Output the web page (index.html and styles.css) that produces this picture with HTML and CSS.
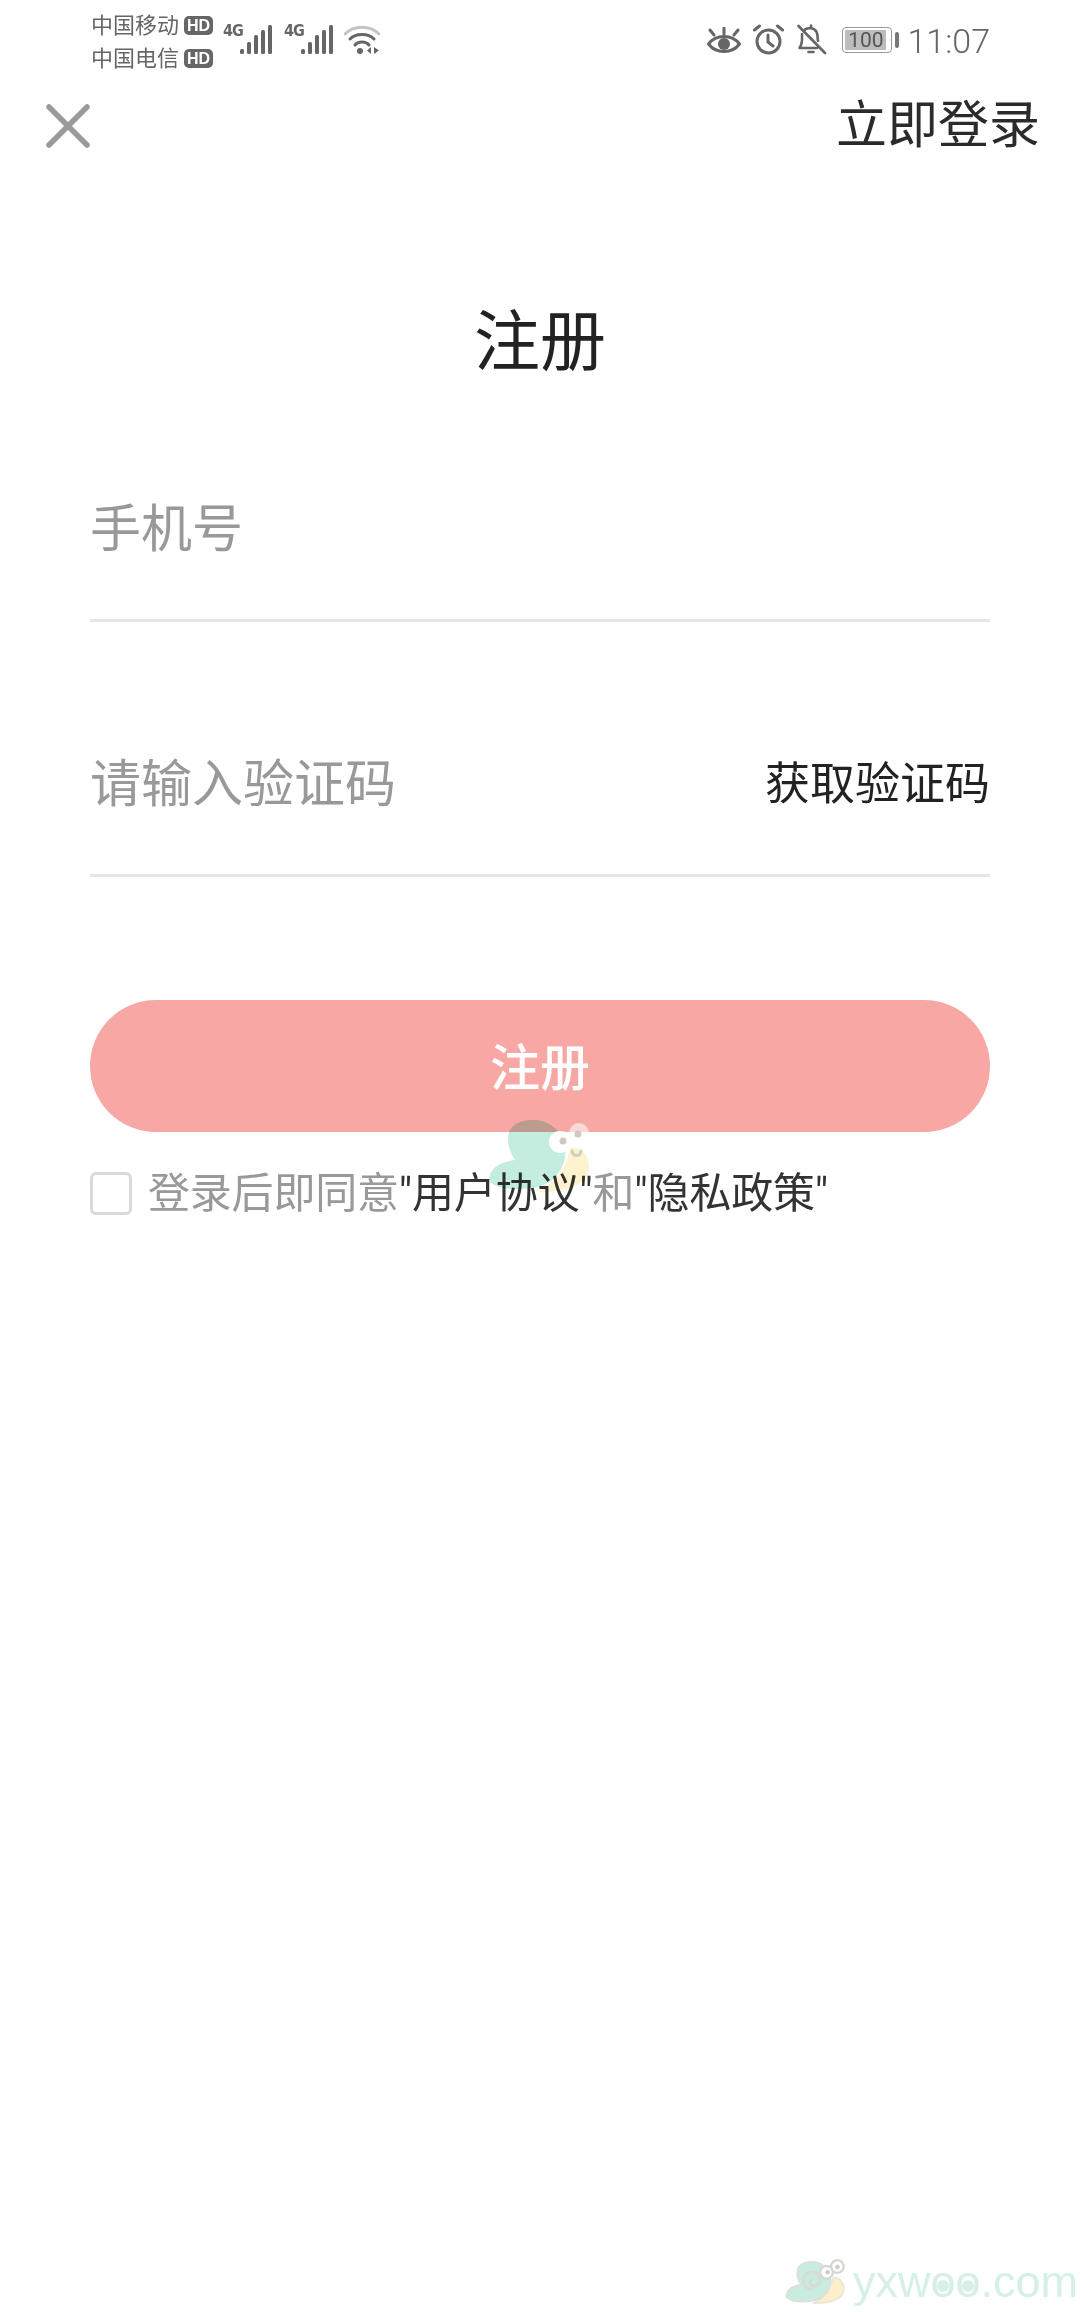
FILE: index.html
```html
<!DOCTYPE html>
<html lang="zh-CN">
<head>
    <meta charset="UTF-8">
    <meta name="viewport" content="width=device-width, initial-scale=1.0">
    <title>注册</title>
    <link rel="stylesheet" href="styles.css">
</head>
<body>
    <div class="page">
        <!-- 状态栏 -->
        <div class="statusbar">
            <div class="status-left">
                <div class="carriers">
                    <div class="carrier"><span>中国移动</span><b class="hd">HD</b></div>
                    <div class="carrier"><span>中国电信</span><b class="hd">HD</b></div>
                </div>
                <div class="signal">
                    <span class="net">4G</span>
                    <svg class="bars" width="32" height="29" viewBox="0 0 32 29"><rect x="0" y="24" width="4" height="5" rx="1.5"/><rect x="7" y="17" width="4" height="12" rx="1.5"/><rect x="14" y="10" width="4" height="19" rx="1.5"/><rect x="21" y="5" width="4" height="24" rx="1.5"/><rect x="28" y="0" width="4" height="29" rx="1.5"/></svg>
                </div>
                <div class="signal">
                    <span class="net">4G</span>
                    <svg class="bars" width="32" height="29" viewBox="0 0 32 29"><rect x="0" y="24" width="4" height="5" rx="1.5"/><rect x="7" y="17" width="4" height="12" rx="1.5"/><rect x="14" y="10" width="4" height="19" rx="1.5"/><rect x="21" y="5" width="4" height="24" rx="1.5"/><rect x="28" y="0" width="4" height="29" rx="1.5"/></svg>
                </div>
                <svg class="wifi" width="36" height="30" viewBox="0 0 36 30" fill="none">
                    <path d="M1 9C10 0 26 0 35 9" stroke="#c4c4c4" stroke-width="3" stroke-linecap="round"/>
                    <path d="M6 14C12 8 24 8 30 14" stroke="#666" stroke-width="3" stroke-linecap="round"/>
                    <path d="M11 20C14 16 22 16 25 20" stroke="#666" stroke-width="3" stroke-linecap="round"/>
                    <circle cx="16" cy="26" r="3" fill="#666"/>
                    <path d="M27 22v7l-4-3.500zM30 22v7l5-3.500z" fill="#666"/>
                </svg>
            </div>
            <div class="status-right">
                <svg class="eye" width="34" height="27" viewBox="0 0 34 27" fill="none" stroke="#666" stroke-width="3" stroke-linecap="round">
                    <path d="M1.500 17C9 7 25 7 32.500 17C25 27 9 27 1.500 17Z"/>
                    <circle cx="17" cy="17" r="6" fill="#666" stroke="none"/>
                    <path d="M17 1v6M3 3l4 5M31 3l-4 5"/>
                </svg>
                <svg class="alarm" width="31" height="31" viewBox="0 0 31 31" fill="none" stroke="#666" stroke-width="3" stroke-linecap="round">
                    <circle cx="15.500" cy="17.500" r="11.500"/>
                    <path d="M15 11v7l5 4M1.500 6l5-4M29.500 6l-5-4"/>
                </svg>
                <svg class="bell" width="30" height="31" viewBox="0 0 30 31" fill="none" stroke="#666" stroke-width="2.600" stroke-linecap="round" stroke-linejoin="round">
                    <path d="M5 10C5 14 6 19 2.500 24H20M21 17C20 12 22 6 14 4V1.500M14 4C11 4 9 4.500 7.500 6"/>
                    <path d="M11.500 28h5M1.500 2L28 29"/>
                </svg>
                <div class="battery">
                    <div class="battery-body"><span class="battery-level">100</span></div>
                    <div class="battery-nub"></div>
                </div>
                <span class="clock">11:07</span>
            </div>
        </div>

        <div class="navbar">
            <svg class="close" width="44" height="44" viewBox="0 0 44 44" fill="none" stroke="#9a9a9a" stroke-width="5.500" stroke-linecap="round"><path d="M3 3l38 38M41 3L3 41"/></svg>
            <span class="login-link">立即登录</span>
        </div>

        <h1 class="title">注册</h1>

        <div class="form">
            <div class="field"><span class="placeholder">手机号</span></div>
            <div class="field field-code">
                <span class="placeholder">请输入验证码</span>
                <span class="get-code">获取验证码</span>
            </div>
            <div class="btn">注册</div>
            <div class="agree">
                <span class="checkbox"></span>
                <span class="agree-text">登录后即同意<em>"用户协议"</em>和<em>"隐私政策"</em></span>
            </div>
        </div>

        <!-- 水印 -->
        <svg class="mark-center" width="130" height="110" viewBox="0 0 130 110">
            <path class="mark-fill" d="M100 48C112 45 120 58 119 68C118 85 100 92 65 92C85 85 96 70 100 48Z" fill="#fdf3cf"/>
            <path class="mark-fill" d="M64 20C78 20 92 30 95 45C98 62 88 85 62 88C45 90 25 90 19 80C20 68 30 62 45 60C38 50 36 38 40 30C45 22 54 20 64 20Z" fill="#c4ecdf"/>
            <circle cx="109" cy="33" r="10" fill="#fff" opacity=".55"/>
            <circle cx="90" cy="42" r="11" fill="#fff"/>
            <circle cx="93" cy="41" r="3.500" fill="#cfc9c3"/>
            <circle cx="108" cy="34" r="3.500" fill="#cfc9c3"/>
            <path d="M102 51c1 6 8 6 9 0" fill="none" stroke="#d5cdbf" stroke-width="3" stroke-linecap="round"/>
        </svg>

        <div class="mark-site">
            <svg width="62" height="46" viewBox="15 15 108 80" fill="none">
                <path d="M100 48C112 45 120 58 119 68C118 85 100 92 65 92C85 85 96 70 100 48Z" fill="#fdf0c8" stroke="#e6e6dd" stroke-width="3"/>
                <path d="M64 20C78 20 92 30 95 45C98 62 88 85 62 88C45 90 25 90 19 80C20 68 30 62 45 60C38 50 36 38 40 30C45 22 54 20 64 20Z" fill="#c9ece0" stroke="#dcdfd8" stroke-width="3"/>
                <path d="M62 68C46 64 44 42 60 38C76 35 84 54 72 61C65 65 57 58 62 51" stroke="#d5dcd5" stroke-width="5" stroke-linecap="round"/>
                <circle cx="108" cy="28" r="11" fill="#fff" stroke="#d5d8d2" stroke-width="4"/>
                <circle cx="89" cy="38" r="11" fill="#fff" stroke="#d5d8d2" stroke-width="4"/>
                <circle cx="91" cy="38" r="4" fill="#c9cdc8"/>
                <circle cx="108" cy="29" r="4" fill="#c9cdc8"/>
            </svg>
            <span class="site-name">yxw<i class="dot-o">o</i><i class="dot-o">o</i>.com</span>
        </div>
    </div>
</body>
</html>
```

FILE: styles.css
```css
* {
    box-sizing: border-box;
}
body {
    margin: 0;
    background: #fff;
    font-family: Roboto, "Noto Sans CJK SC", sans-serif;
    color: #222;
}
.page {
    position: relative;
    height: 2312px;
    overflow: hidden;
}

/* status bar */
.statusbar {
    height: 80px;
    padding: 9px 90px 0 91px;
    display: flex;
    justify-content: space-between;
    color: #666;
}
.status-left {
    display: flex;
}
.carriers {
    width: 132px;
}
.carrier {
    height: 33px;
    display: flex;
    align-items: center;
    gap: 5px;
    font-size: 22px;
    line-height: 33px;
}
.hd {
    width: 29px;
    height: 19px;
    border-radius: 5px;
    background: #666;
    color: #fff;
    font: bold 16px/19px "Liberation Sans", sans-serif;
    text-align: center;
}
.signal {
    width: 61px;
    height: 46px;
    display: flex;
}
.net {
    width: 17px;
    margin-top: 13px;
    font: bold 16px/18px "DejaVu Sans", sans-serif;
    font-stretch: condensed;
    letter-spacing: -1px;
    white-space: nowrap;
}
.bars {
    margin-top: 16px;
    fill: #666;
}
.wifi {
    margin-top: 16px;
    margin-left: -1px;
}
.status-right {
    display: flex;
    align-items: flex-start;
}
.eye {
    margin: 18px 12px 0 0;
}
.alarm {
    margin: 15px 13px 0 0;
}
.bell {
    margin: 15px 15px 0 0;
}
.battery {
    display: flex;
    align-items: center;
    gap: 3px;
    margin: 18px 8px 0 0;
    height: 26px;
}
.battery-body {
    width: 50px;
    height: 26px;
    padding: 2px;
    border: 1.500px solid #999;
    border-radius: 4px;
}
.battery-level {
    display: block;
    width: 41px;
    height: 100%;
    background: #bdbdbd;
    color: #555;
    font-size: 21px;
    line-height: 20px;
    text-align: center;
}
.battery-nub {
    width: 4px;
    height: 16px;
    border-radius: 2px;
    background: #777;
}
.clock {
    margin-top: 12px;
    font-size: 34px;
    line-height: 40px;
    font-weight: 300;
}

/* nav */
.navbar {
    height: 86px;
    padding: 6px 40px 0 46px;
    display: flex;
    justify-content: space-between;
    align-items: center;
}
.login-link {
    font-size: 51px;
    color: #2b2b2b;
    line-height: 60px;
}
.title {
    margin: 137px 0 0;
    font-size: 66px;
    line-height: 80px;
    font-weight: 400;
    text-align: center;
}

/* form */
.form {
    padding: 52px 90px 0;
}
.field {
    height: 187px;
    padding-bottom: 4px;
    border-bottom: 3px solid #e6e6e6;
    display: flex;
    justify-content: space-between;
    align-items: center;
}
.field-code {
    margin-top: 68px;
}
.placeholder {
    font-size: 51px;
    color: #999;
}
.get-code {
    font-size: 45px;
}
.btn {
    margin-top: 123px;
    height: 132px;
    border-radius: 66px;
    background: #f8a8a4;
    color: #fff;
    font-size: 50px;
    font-weight: 500;
    line-height: 139px;
    text-align: center;
}
.agree {
    margin-top: 40px;
    height: 42px;
    display: flex;
    align-items: center;
    gap: 16px;
}
.checkbox {
    width: 42px;
    height: 43px;
    border: 3px solid #d9d9d9;
    border-radius: 6px;
}
.agree-text {
    font-size: 42px;
    line-height: 44px;
    padding-top: 2px;
    letter-spacing: -0.2px;
    color: #999;
    white-space: nowrap;
}
.agree-text em {
    font-style: normal;
    color: #333;
}

/* watermarks */
.mark-center {
    position: absolute;
    left: 470px;
    top: 1100px;
}
.mark-fill {
    mix-blend-mode: multiply;
}
.mark-site {
    position: absolute;
    right: 2px;
    bottom: 5px;
    display: flex;
    align-items: center;
    gap: 7px;
}
.site-name {
    font: 45px/50px "Liberation Sans", sans-serif;
    color: #d6f0e7;
}
.dot-o {
    position: relative;
    font-style: normal;
}
.dot-o::after {
    content: "";
    position: absolute;
    left: 50%;
    top: 50%;
    width: 12px;
    height: 12px;
    margin: -2px 0 0 -6px;
    border-radius: 50%;
    background: #d6f0e7;
}
```
